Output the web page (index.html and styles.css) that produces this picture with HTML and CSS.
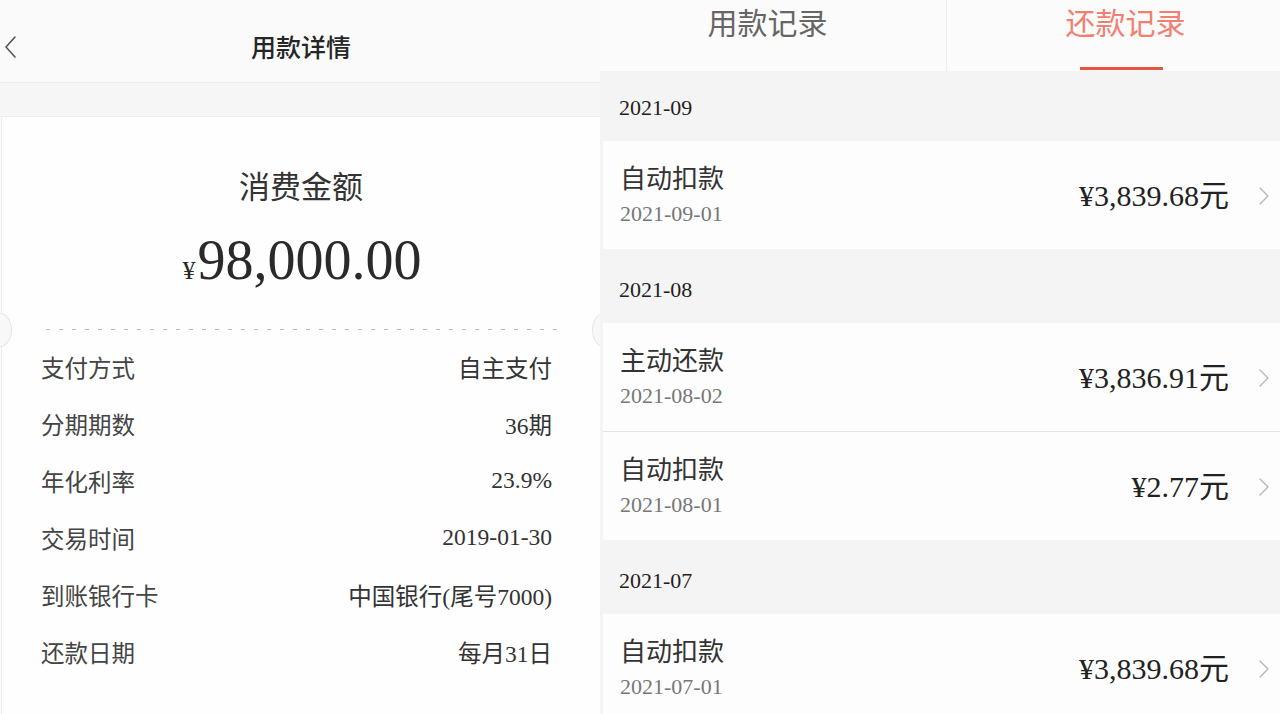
FILE: index.html
```html
<!DOCTYPE html>
<html lang="zh-CN">
<head>
<meta charset="utf-8">
<title>用款详情</title>
<link rel="stylesheet" href="styles.css">
</head>
<body>
<div class="page">
  <section class="detail">
    <header class="nav">
      <svg class="back" width="14" height="24" viewBox="0 0 14 24"><path d="M12 2 L3 12 L12 22" fill="none" stroke="#555" stroke-width="1.6" stroke-linecap="round" stroke-linejoin="round"/></svg>
      <h1 class="nav-title">用款详情</h1>
    </header>
    <div class="band"></div>
    <div class="card">
      <span class="notch notch-left"></span>
      <span class="notch notch-right"></span>
      <div class="card-title">消费金额</div>
      <div class="amount"><span class="yen">¥</span>98,000.00</div>
      <div class="dash"></div>
      <div class="rows">
        <div class="row"><span class="label">支付方式</span><span class="value">自主支付</span></div>
        <div class="row"><span class="label">分期期数</span><span class="value">36期</span></div>
        <div class="row"><span class="label">年化利率</span><span class="value">23.9%</span></div>
        <div class="row"><span class="label">交易时间</span><span class="value">2019-01-30</span></div>
        <div class="row"><span class="label">到账银行卡</span><span class="value">中国银行(尾号7000)</span></div>
        <div class="row"><span class="label">还款日期</span><span class="value">每月31日</span></div>
      </div>
    </div>
  </section>

  <section class="records">
    <nav class="tabs">
      <div class="tab tab-first">用款记录</div>
      <div class="tab tab-active">还款记录</div>
    </nav>
    <div class="list">
      <div class="month month-first">2021-09</div>
      <div class="item">
        <div class="item-main"><div class="item-title">自动扣款</div><div class="item-date">2021-09-01</div></div>
        <div class="item-amount">¥3,839.68元</div>
        <svg class="chev" width="12" height="20" viewBox="0 0 12 20"><path d="M2 2 L10 10 L2 18" fill="none" stroke="#b5b5b5" stroke-width="1.3" stroke-linecap="round" stroke-linejoin="round"/></svg>
      </div>
      <div class="month">2021-08</div>
      <div class="item item-sep">
        <div class="item-main"><div class="item-title">主动还款</div><div class="item-date">2021-08-02</div></div>
        <div class="item-amount">¥3,836.91元</div>
        <svg class="chev" width="12" height="20" viewBox="0 0 12 20"><path d="M2 2 L10 10 L2 18" fill="none" stroke="#b5b5b5" stroke-width="1.3" stroke-linecap="round" stroke-linejoin="round"/></svg>
      </div>
      <div class="item">
        <div class="item-main"><div class="item-title">自动扣款</div><div class="item-date">2021-08-01</div></div>
        <div class="item-amount">¥2.77元</div>
        <svg class="chev" width="12" height="20" viewBox="0 0 12 20"><path d="M2 2 L10 10 L2 18" fill="none" stroke="#b5b5b5" stroke-width="1.3" stroke-linecap="round" stroke-linejoin="round"/></svg>
      </div>
      <div class="month">2021-07</div>
      <div class="item">
        <div class="item-main"><div class="item-title">自动扣款</div><div class="item-date">2021-07-01</div></div>
        <div class="item-amount">¥3,839.68元</div>
        <svg class="chev" width="12" height="20" viewBox="0 0 12 20"><path d="M2 2 L10 10 L2 18" fill="none" stroke="#b5b5b5" stroke-width="1.3" stroke-linecap="round" stroke-linejoin="round"/></svg>
      </div>
    </div>
  </section>
</div>
</body>
</html>
```

FILE: styles.css
```css
* { box-sizing: border-box; margin: 0; padding: 0; }

html, body {
  width: 1280px;
  height: 714px;
  overflow: hidden;
  background: #f4f4f4;
}

body {
  font-family: "Liberation Serif", "Noto Sans CJK SC", serif;
  color: #333;
}

.page {
  display: grid;
  grid-template-columns: 600px 680px;
  height: 714px;
}

/* ---------- left: detail ---------- */
.detail {
  display: flex;
  flex-direction: column;
  background: #fcfcfc;
  overflow: hidden;
}

.detail > * { flex-shrink: 0; }

.nav {
  position: relative;
  height: 83px;
  display: flex;
  align-items: center;
  justify-content: center;
  background: #fafafa;
  border-bottom: 1px solid #ececec;
}

.back {
  position: absolute;
  left: 3px;
  top: 35px;
}

.nav-title {
  font-family: "Noto Sans CJK SC", sans-serif;
  font-size: 25px;
  font-weight: 500;
  color: #262626;
  line-height: 30px;
  margin-top: 10px;
  margin-left: 2px;
}

.band {
  height: 34px;
  background: #f6f6f6;
  border-bottom: 1px solid #ececec;
}

.card {
  position: relative;
  flex: 1 0 auto;
  display: flex;
  flex-direction: column;
  align-items: center;
  background: #fefefe;
  border-left: 1px solid #ececec;
  margin-left: 1px;
}

.card > * { flex-shrink: 0; }

.notch {
  position: absolute;
  top: 196px;
  width: 24px;
  height: 34px;
  border-radius: 50%;
  background: #f8f8f8;
  border: 1px solid #e6e6e6;
}
.notch-left { left: -14px; }
.notch-right { right: -16px; }

.card-title {
  margin-top: 48px;
  font-family: "Noto Sans CJK SC", sans-serif;
  font-size: 31px;
  line-height: 40px;
  color: #333;
}

.amount {
  margin-top: 25px;
  font-size: 56px;
  line-height: 60px;
  color: #2a2a2a;
  margin-left: 2px;
}

.yen {
  font-size: 26px;
  margin-right: 2px;
}

.dash {
  align-self: flex-start;
  margin-left: 44px;
  margin-top: 28px;
  width: 513px;
  height: 1px;
  background-image: repeating-linear-gradient(to right, #b9b9b9 0 4px, transparent 4px 13px);
}

.rows {
  align-self: stretch;
  margin-top: 8px;
  padding: 0 48px 0 39px;
}

.row {
  display: flex;
  justify-content: space-between;
  align-items: center;
  height: 57px;
  font-size: 23.5px;
}

.label { color: #444; }
.value { color: #333; }

/* ---------- right: records ---------- */
.records {
  display: flex;
  flex-direction: column;
  overflow: hidden;
  background: #f4f4f4;
}

.records > * { flex-shrink: 0; }

.tabs {
  display: grid;
  grid-template-columns: 347px 1fr;
  height: 71px;
  background: #fbfbfb;
}

.tab {
  display: flex;
  flex-direction: column;
  align-items: center;
  font-family: "Noto Sans CJK SC", sans-serif;
  font-size: 30px;
  line-height: 36px;
  padding-top: 3px;
  color: #666;
}

.tab-first {
  padding-right: 11px;
  border-right: 1px solid #eeeeee;
}

.tab-active {
  padding-left: 24px;
  color: #f27f70;
}

.tab-active::after {
  content: "";
  margin-top: auto;
  margin-bottom: 1px;
  margin-right: 8px;
  width: 83px;
  height: 3px;
  background: #e8553f;
}

.list {
  display: flex;
  flex-direction: column;
}

.list > * { flex-shrink: 0; }

.month {
  height: 74px;
  padding: 26px 0 0 19px;
  font-size: 22px;
  line-height: 30px;
  color: #1e1e1e;
  background: #f4f4f4;
}

.month-first {
  height: 70px;
  padding-top: 22px;
}

.item {
  display: flex;
  align-items: center;
  height: 108px;
  padding: 0 10px 0 20px;
  background: #fdfdfd;
  margin-left: 3px;
}

.item-sep {
  border-bottom: 1px solid #e3e3e3;
  height: 109px;
}

.item-main {
  align-self: flex-start;
  flex: 1;
  margin-left: -3px;
}

.item-title {
  margin-top: 20px;
  font-family: "Noto Sans CJK SC", sans-serif;
  font-size: 26px;
  line-height: 32px;
  color: #333;
}

.item-date {
  margin-top: 7px;
  font-size: 22px;
  line-height: 28px;
  color: #777;
}

.item-amount {
  font-size: 30px;
  line-height: 36px;
  color: #222;
  margin-top: 2px;
}

.chev {
  margin-left: 29px;
  margin-top: 2px;
}
```
